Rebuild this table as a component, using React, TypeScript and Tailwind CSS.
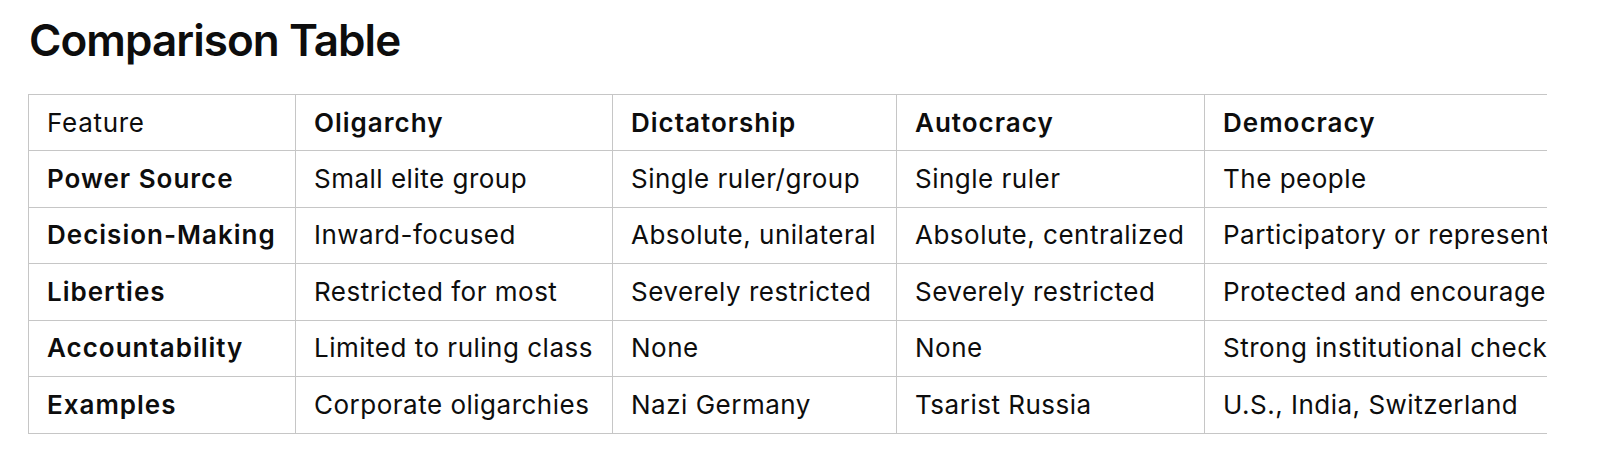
import React from "react";

const headers = ["Feature", "Oligarchy", "Dictatorship", "Autocracy", "Democracy"];
const rows: string[][] = [
  ["Power Source", "Small elite group", "Single ruler/group", "Single ruler", "The people"],
  ["Decision-Making", "Inward-focused", "Absolute, unilateral", "Absolute, centralized", "Participatory or representative"],
  ["Liberties", "Restricted for most", "Severely restricted", "Severely restricted", "Protected and encouraged"],
  ["Accountability", "Limited to ruling class", "None", "None", "Strong institutional checks"],
  ["Examples", "Corporate oligarchies", "Nazi Germany", "Tsarist Russia", "U.S., India, Switzerland"],
];
const widths = ["w-[267px]", "w-[317px]", "w-[284px]", "w-[308px]", "w-[430px]"];

export default function App() {
  return (
    <div
      className="w-[1600px] h-[459px] bg-white text-[#0d0d0d] pl-[28px] pr-[53px] pt-[12px] overflow-hidden"
      style={{ fontFamily: "Inter, 'Noto Sans', sans-serif" }}
    >
      <h1 className="text-[44px] leading-[56px] font-semibold tracking-[-0.95px] pl-[1px]">Comparison Table</h1>
      <div className="mt-[26px] w-full overflow-hidden">
        <table className="border-collapse table-fixed w-[1606px] text-[26px] leading-[32px] whitespace-nowrap">
          <colgroup>
            {widths.map((w, i) => (
              <col key={i} className={w} />
            ))}
          </colgroup>
          <thead>
            <tr className="h-[56px]">
              {headers.map((h, i) => (
                <th
                  key={h}
                  className={`border border-[#c6c6c6] px-[18px] text-left align-middle ${i === 0 ? "font-normal tracking-[0.7px]" : "font-semibold tracking-[1px]"}`}
                >
                  {h}
                </th>
              ))}
            </tr>
          </thead>
          <tbody>
            {rows.map((r) => (
              <tr key={r[0]} className="h-[56.5px]">
                {r.map((c, i) => (
                  <td
                    key={i}
                    className={`border border-[#c6c6c6] px-[18px] align-middle overflow-hidden ${i === 0 ? "font-semibold tracking-[1px]" : "font-normal tracking-[0.5px]"}`}
                  >
                    {c}
                  </td>
                ))}
              </tr>
            ))}
          </tbody>
        </table>
      </div>
    </div>
  );
}
